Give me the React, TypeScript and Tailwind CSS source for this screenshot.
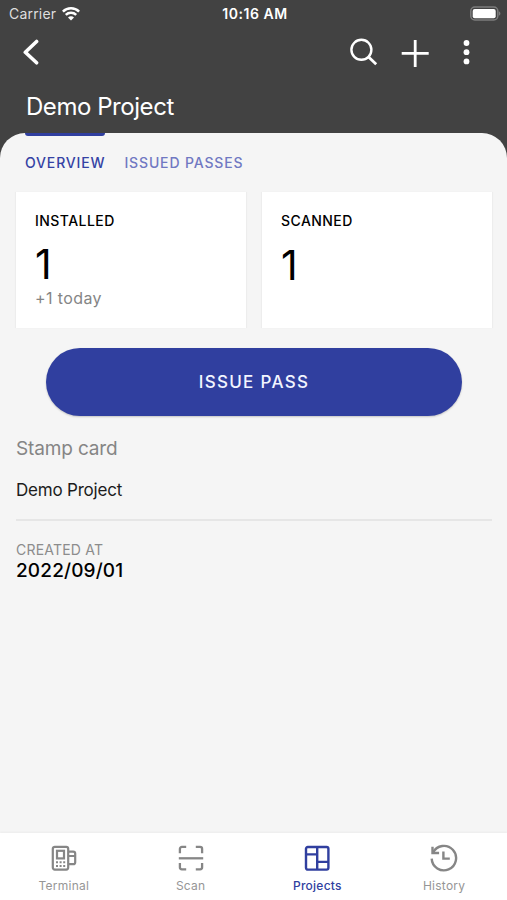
import { useState } from 'react'

const TABS = ['OVERVIEW', 'ISSUED PASSES']

function WifiIcon() {
  return (
    <svg width="18" height="14" viewBox="0 0 18 14" fill="none" stroke="white" strokeWidth="2.5">
      <path d="M0.9 4.6a11.5 11.5 0 0 1 16.2 0" />
      <path d="M3.8 7.9a7.4 7.4 0 0 1 10.4 0" />
      <path d="M9 13.6 6 10.6a4.2 4.2 0 0 1 6 0Z" fill="white" stroke="none" />
    </svg>
  )
}

function BatteryIcon() {
  return (
    <svg width="31" height="16" viewBox="0 0 31 16" fill="none">
      <rect x="0.8" y="1" width="27" height="13" rx="4" stroke="#7c7c7c" strokeWidth="1.5" />
      <rect x="2.7" y="2.9" width="23" height="9.4" rx="2" fill="white" />
      <path d="M28.8 5.3c1.1.5 1.6 1.4 1.6 2.3s-.5 1.8-1.6 2.3Z" fill="#7c7c7c" />
    </svg>
  )
}

function TerminalIcon() {
  return (
    <svg width="28" height="28" viewBox="0 0 28 28" fill="none" stroke="currentColor" strokeWidth="2.2">
      <rect x="2.8" y="2.8" width="15.4" height="22.8" rx="2" />
      <rect x="7" y="6.8" width="7" height="7.6" />
      <path d="M18.2 7.6h5a2 2 0 0 1 2 2v8.6a2 2 0 0 1-2 2h-5M18.2 12h7" />
      <path d="M6 18.3h2M9.6 18.3h2M13.2 18.3h2M6 22.1h2M9.6 22.1h2M13.2 22.1h2" strokeWidth="2" />
    </svg>
  )
}

function ScanIcon() {
  return (
    <svg width="28" height="28" viewBox="0 0 28 28" fill="none" stroke="currentColor" strokeWidth="2.3">
      <path d="M2.9 9.2V4.9a2 2 0 0 1 2-2h4.3M18.8 2.9h4.3a2 2 0 0 1 2 2v4.3M2.9 19v4.3a2 2 0 0 0 2 2h4.3M18.8 25.3h4.3a2 2 0 0 0 2-2V19" />
      <path d="M1.8 14.3h24.4" />
    </svg>
  )
}

function ProjectsIcon() {
  return (
    <svg width="28" height="28" viewBox="0 0 28 28" fill="none" stroke="currentColor" strokeWidth="2.4">
      <rect x="3" y="3" width="22.4" height="22.6" rx="1.8" />
      <path d="M14.2 3v22.6M3 10.4h11.2M14.2 17.9h11.2" />
    </svg>
  )
}

function HistoryIcon() {
  return (
    <svg width="28" height="28" viewBox="0 0 28 28" fill="none" stroke="currentColor" strokeWidth="2.4">
      <path d="M3 8.6A12.2 12.2 0 1 1 1.7 14.6" />
      <path d="M2.5 2.8v6.2h6.6" />
      <path d="M13.4 7.6v7h6.4" />
    </svg>
  )
}

const NAV = [
  { label: 'Terminal', icon: TerminalIcon },
  { label: 'Scan', icon: ScanIcon },
  { label: 'Projects', icon: ProjectsIcon },
  { label: 'History', icon: HistoryIcon },
]

function StatCard({ label, value, note }: { label: string; value: number; note?: string }) {
  return (
    <div className="h-[136px] flex-1 bg-white px-[19px] pt-[19px] shadow-[1px_0_1px_rgba(0,0,0,0.03),-1px_0_1px_rgba(0,0,0,0.03)]">
      <div className="text-sm leading-5 font-medium tracking-[0.45px] text-black">{label}</div>
      <div className={`text-[41px] leading-[48px] text-black ${note ? 'mt-[9px]' : 'mt-[10px]'}`}>{value}</div>
      {note && <div className="text-base leading-5 tracking-[0.4px] text-[#858585]">{note}</div>}
    </div>
  )
}

export default function App() {
  const [tab, setTab] = useState('OVERVIEW')
  const [page, setPage] = useState('Projects')

  return (
    <div className="flex h-[900px] w-[507px] flex-col overflow-hidden bg-[#424242] font-['Inter',sans-serif]">
      {/* Status bar */}
      <div className="grid h-7 grid-cols-3 items-center pl-[9px] pr-[6px] text-white">
        <div className="flex items-center gap-[6px] text-sm tracking-[0.2px] text-[#dedede]">
          <span>Carrier</span>
          <WifiIcon />
        </div>
        <div className="text-center text-sm font-semibold tracking-[0.55px]">10:16 AM</div>
        <div className="flex justify-end">
          <BatteryIcon />
        </div>
      </div>

      {/* Actions */}
      <div className="flex h-[50px] items-center justify-between pl-[18px] pr-[31px] text-white">
        <button>
          <svg width="26" height="28" viewBox="0 0 26 28" fill="none" stroke="white" strokeWidth="3.6" strokeLinecap="round" strokeLinejoin="round">
            <path d="M18.6 2.5 7.3 13.2l11.3 10.6" />
          </svg>
        </button>
        <div className="flex items-center">
          <svg width="30" height="30" viewBox="0 0 30 30" fill="none" stroke="white" strokeWidth="2.4">
            <circle cx="12.4" cy="11.8" r="10" />
            <path d="m19.3 18.8 7.9 7.4" strokeWidth="2.8" />
          </svg>
          <svg className="ml-[21px]" width="30" height="30" viewBox="0 0 30 30" fill="none" stroke="white" strokeWidth="2.8">
            <path d="M15.2 2v27M1.7 15.3h27" />
          </svg>
          <svg className="ml-[26px]" width="20" height="30" viewBox="0 0 20 30" fill="white">
            <circle cx="10.5" cy="5" r="2.9" />
            <circle cx="10.5" cy="14.2" r="2.9" />
            <circle cx="10.5" cy="23.4" r="2.9" />
          </svg>
        </div>
      </div>

      <div className="h-[55px] pl-[26px]">
        <h1 className="pt-[13px] text-2xl leading-8 tracking-[-0.45px] text-white">Demo Project</h1>
      </div>

      {/* Sheet */}
      <div className="flex min-h-0 flex-1 flex-col rounded-t-[25px] bg-[#f5f5f5]">
        <div className="flex h-[59px] gap-[19px] pl-[25px]">
          {TABS.map((t) => (
            <button key={t} onClick={() => setTab(t)} className="flex flex-col items-stretch">
              <span className={`h-[3px] rounded-b-sm ${tab === t ? 'bg-[#303f9f]' : ''}`} />
              <span className={`pt-[17px] text-sm leading-5 font-medium tracking-[0.85px] ${tab === t ? 'text-[#3442a4]' : 'text-[#7078c2]'}`}>
                {t}
              </span>
            </button>
          ))}
        </div>

        <div className="flex gap-4 pl-4 pr-[15px]">
          <StatCard label="INSTALLED" value={1} note="+1 today" />
          <StatCard label="SCANNED" value={1} />
        </div>

        <button className="mt-5 mr-[45px] ml-[46px] h-[68px] shrink-0 rounded-full bg-[#303f9f] pt-[2px] text-[17px] font-medium tracking-[1.3px] text-[#f2f5ff] shadow-[0_1px_2px_rgba(0,0,0,0.2)]">
          ISSUE PASS
        </button>

        <div className="mt-[19px] mr-[15px] ml-4">
          <div className="text-[19px] leading-7 tracking-[-0.15px] text-[#858585]">Stamp card</div>
          <div className="mt-[15px] text-[17px] leading-6 tracking-[-0.2px] text-[#1c1c1c]">Demo Project</div>
          <div className="mt-[17px] h-[2px] bg-[#e6e6e6]" />
          <div className="mt-[19px] text-sm leading-5 tracking-[0.2px] text-[#8c8c8c]">CREATED AT</div>
          <div className="text-[19px] leading-[22px] font-medium tracking-[0.15px] text-black">2022/09/01</div>
        </div>
      </div>

      {/* Bottom navigation */}
      <nav className="grid h-[67px] shrink-0 grid-cols-4 bg-white shadow-[0_-1px_2px_rgba(0,0,0,0.04)]">
        {NAV.map(({ label, icon: Icon }) => (
          <button
            key={label}
            onClick={() => setPage(label)}
            className={`flex flex-col items-center pt-[11px] pl-px ${page === label ? 'text-[#303f9f]' : 'text-[#868686]'}`}
          >
            <Icon />
            <span className={`mt-[6px] text-xs leading-4 ${page === label ? 'font-medium tracking-[0.25px]' : 'tracking-[0.25px] text-[#969696]'}`}>
              {label}
            </span>
          </button>
        ))}
      </nav>
    </div>
  )
}
